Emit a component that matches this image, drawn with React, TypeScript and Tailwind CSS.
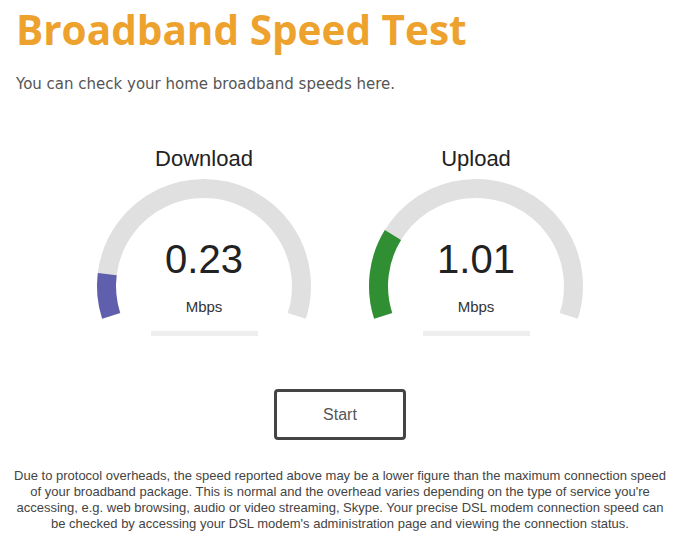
const R = 97.5;
const CX = 115;
const CY = 112;
const HALF = 17.8; // degrees below horizontal at each end
const SWEEP = 180 + HALF * 2;

function point(deg: number) {
  const rad = (deg * Math.PI) / 180;
  return [CX + R * Math.cos(rad), CY - R * Math.sin(rad)];
}

function arc(fraction: number) {
  const start = 180 + HALF;
  const end = start - SWEEP * fraction;
  const [x1, y1] = point(start);
  const [x2, y2] = point(end);
  const large = SWEEP * fraction > 180 ? 1 : 0;
  return `M ${x1} ${y1} A ${R} ${R} 0 ${large} 1 ${x2} ${y2}`;
}

function Gauge({ label, value, fraction, color }: { label: string; value: string; fraction: number; color: string }) {
  return (
    <div className="flex w-[272px] flex-col items-center">
      <h2 className="text-[22px] leading-[26px] text-[#222]">{label}</h2>
      <div className="relative mt-[2px] h-[150px] w-[230px]">
        <svg width="230" height="150" viewBox="0 0 230 150">
          <path d={arc(1)} fill="none" stroke="#e0e0e0" strokeWidth="19" />
          <path d={arc(fraction)} fill="none" stroke={color} strokeWidth="19" />
        </svg>
        <div className="absolute inset-x-0 top-[61px] text-center text-[40px] leading-[48px] text-[#222]">{value}</div>
        <div className="absolute inset-x-0 top-[124px] text-center text-[15px] leading-[18px] text-[#333]">Mbps</div>
      </div>
      <div className="mt-[7px] h-[5px] w-[107px] bg-[#eeeeee]" />
    </div>
  );
}

export default function App() {
  return (
    <div className="min-h-[540px] w-[680px] bg-white font-['Liberation_Sans',Arial,sans-serif]">
      <div className="px-4 pt-[5px]">
        <h1 className="font-['Open_Sans',sans-serif] text-[40.5px] leading-[50px] font-bold text-[#eea22e]">Broadband Speed Test</h1>
        <p className="mt-[19px] font-['DejaVu_Sans',Verdana,sans-serif] text-[15px] leading-[20px] text-[#555]">
          You can check your home broadband speeds here.
        </p>
      </div>

      <div className="mt-[52px] flex justify-center">
        <Gauge label="Download" value="0.23" fraction={0.115} color="#5f5fad" />
        <Gauge label="Upload" value="1.01" fraction={0.229} color="#2f8f32" />
      </div>

      <div className="mt-[53px] flex justify-center">
        <button className="h-[51px] w-[132px] rounded-[4px] border-[3px] border-[#444] bg-white text-[16px] text-[#555]">
          Start
        </button>
      </div>

      <p className="mx-auto mt-[28px] w-[660px] text-center text-[13px] leading-[16px] text-[#444]">
        Due to protocol overheads, the speed reported above may be a lower figure than the maximum connection speed of your
        broadband package. This is normal and the overhead varies depending on the type of service you're accessing, e.g. web
        browsing, audio or video streaming, Skype. Your precise DSL modem connection speed can be checked by accessing your
        DSL modem's administration page and viewing the connection status.
      </p>
    </div>
  );
}
